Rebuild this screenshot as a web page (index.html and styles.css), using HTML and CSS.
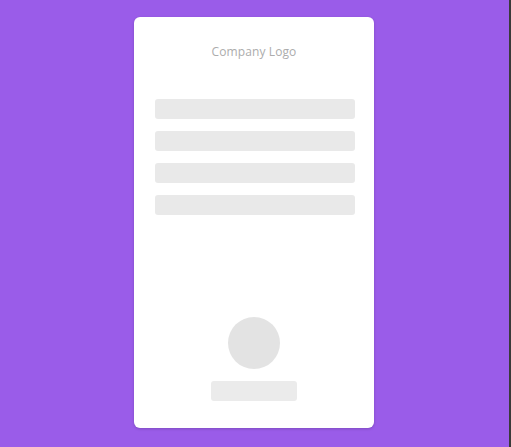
FILE: index.html
```html
<!DOCTYPE html>
<html>
<head>
<meta charset="utf-8">
<link rel="stylesheet" href="styles.css">
</head>
<body>
<div class="stage">
  <div class="card">
    <div class="logo">Company Logo</div>
    <div class="lines">
      <div class="line"></div>
      <div class="line"></div>
      <div class="line"></div>
      <div class="line"></div>
    </div>
    <div class="spacer"></div>
    <div class="profile">
      <div class="avatar"></div>
      <div class="name"></div>
    </div>
  </div>
</div>
</body>
</html>
```
FILE: styles.css
```css
html {
  background: #3a3a3a;
}
body {
  margin: 0;
  width: 509px;
  height: 447px;
  background: #9a5ce9;
  font-family: "Open Sans", "Liberation Sans", sans-serif;
}
.stage {
  display: flex;
  justify-content: center;
  padding-top: 17px;
  padding-right: 1px;
}
.card {
  width: 240px;
  height: 411px;
  box-sizing: border-box;
  background: #ffffff;
  border-radius: 6px;
  box-shadow: 0 1px 3px rgba(0, 0, 0, 0.18);
  display: flex;
  flex-direction: column;
  align-items: center;
  padding: 26px 20px 27px;
}
.logo {
  font-size: 12px;
  line-height: 18px;
  color: #acacac;
  letter-spacing: 0.1px;
}
.lines {
  margin-top: 38px;
  margin-left: 2px;
  width: 200px;
  display: flex;
  flex-direction: column;
  gap: 12px;
}
.line {
  height: 20px;
  background: #e9e9e9;
  border-radius: 3px;
}
.spacer {
  flex: 1;
}
.profile {
  display: flex;
  flex-direction: column;
  align-items: center;
  gap: 12px;
}
.avatar {
  width: 52px;
  height: 52px;
  border-radius: 50%;
  background: #e3e3e3;
}
.name {
  width: 86px;
  height: 20px;
  border-radius: 3px;
  background: #ebebeb;
}
```
